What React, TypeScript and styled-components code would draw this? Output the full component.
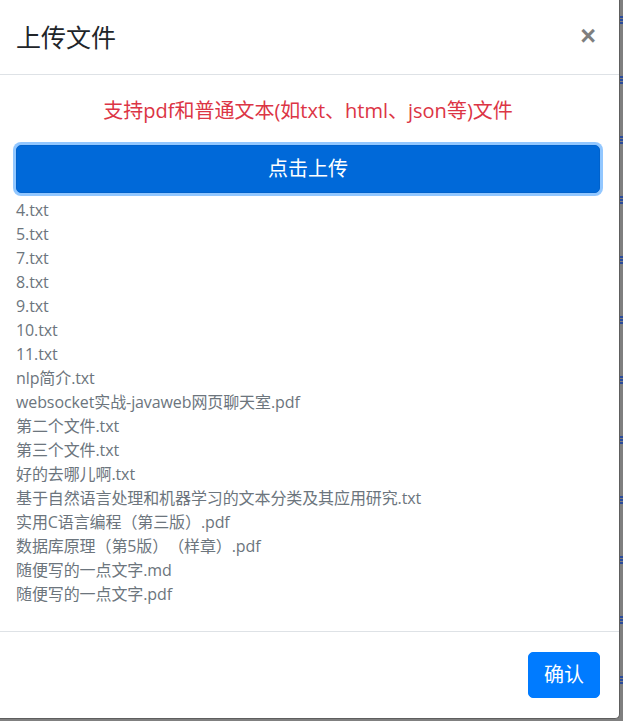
import { createGlobalStyle, styled } from "styled-components";

const GlobalStyle = createGlobalStyle`
	html, body {
		margin: 0;
		padding: 0;
		background-color: #808080;
	}
	body {
		font-family: "Open Sans", "Noto Sans CJK SC", sans-serif;
		text-spacing-trim: space-all;
	}
`;

const Page = styled.div`
	display: flex;
	flex-direction: row;
	width: 623px;
	height: 721px;
	overflow: hidden;
`;

const Modal = styled.div`
	display: flex;
	flex-direction: column;
	width: 619px;
	flex: none;
	align-self: flex-start;
	background-color: #ffffff;
	border-right: 1px solid #5e5e5e;
	border-bottom: 1px solid #5e5e5e;
	border-bottom-right-radius: 5px;
`;

const Backdrop = styled.div`
	flex: 1;
	background-color: #7f7f7f;
	background-image: repeating-linear-gradient(
		to bottom,
		#2b4d9c 0px,
		#2b4d9c 2px,
		transparent 2px,
		transparent 3px,
		#2b4d9c 3px,
		#2b4d9c 5px,
		transparent 5px,
		transparent 6px,
		#2b4d9c 6px,
		#2b4d9c 8px,
		transparent 8px,
		transparent 60px
	);
	background-size: 100% 60px;
	background-position: 0 76px;
`;

const Header = styled.div`
	display: flex;
	align-items: center;
	justify-content: space-between;
	padding: 16px 19px 16px 16px;
	border-bottom: 1px solid #dee2e6;
`;

const Title = styled.h4`
	margin: 0;
	font-family: "Open Sans", "Noto Sans CJK SC", sans-serif;
	font-size: 25px;
	font-weight: 400;
	line-height: 42px;
	color: #212529;
`;

const CloseButton = styled.button`
	border: 0;
	background: transparent;
	padding: 0 4px 2px 0;
	font-family: "Liberation Sans", sans-serif;
	font-size: 27px;
	font-weight: 700;
	line-height: 1;
	color: #000000;
	opacity: 0.5;
	cursor: pointer;
`;

const Body = styled.div`
	display: flex;
	flex-direction: column;
	padding: 16px 19px 16px 16px;
`;

const Hint = styled.p`
	margin: 5px 0 19px;
	text-align: center;
	font-size: 20px;
	line-height: 30px;
	color: #dc3545;
`;

const UploadButton = styled.button`
	display: block;
	width: 100%;
	height: 48px;
	padding: 0 16px;
	font-family: "Open Sans", "Noto Sans CJK SC", sans-serif;
	font-size: 20px;
	line-height: 30px;
	color: #ffffff;
	background-color: #0069d9;
	border: 1px solid #0062cc;
	border-radius: 5px;
	box-shadow: 0 0 0 3px rgba(38, 143, 255, 0.5);
	cursor: pointer;
`;

const FileList = styled.ul`
	list-style: none;
	margin: 5px 0 9px;
	padding: 0;
`;

const FileItem = styled.li`
	font-size: 16px;
	line-height: 24px;
	letter-spacing: -0.1px;
	color: #6c757d;
	white-space: nowrap;
`;

const Footer = styled.div`
	display: flex;
	justify-content: flex-end;
	padding: 20px 19px 20px 16px;
	border-top: 1px solid #dee2e6;
`;

const ConfirmButton = styled.button`
	width: 72px;
	height: 46px;
	padding: 0;
	font-family: "Open Sans", "Noto Sans CJK SC", sans-serif;
	font-size: 20px;
	line-height: 30px;
	color: #ffffff;
	background-color: #007bff;
	border: 1px solid #007bff;
	border-radius: 5px;
	cursor: pointer;
`;

const files = [
	"4.txt",
	"5.txt",
	"7.txt",
	"8.txt",
	"9.txt",
	"10.txt",
	"11.txt",
	"nlp简介.txt",
	"websocket实战-javaweb网页聊天室.pdf",
	"第二个文件.txt",
	"第三个文件.txt",
	"好的去哪儿啊.txt",
	"基于自然语言处理和机器学习的文本分类及其应用研究.txt",
	"实用C语言编程（第三版）.pdf",
	"数据库原理（第5版）（样章）.pdf",
	"随便写的一点文字.md",
	"随便写的一点文字.pdf",
];

export default function App() {
	return (
		<>
			<GlobalStyle />
			<Page>
				<Modal>
					<Header>
						<Title>上传文件</Title>
						<CloseButton aria-label="Close">×</CloseButton>
					</Header>
					<Body>
						<Hint>支持pdf和普通文本(如txt、html、json等)文件</Hint>
						<UploadButton>点击上传</UploadButton>
						<FileList>
							{files.map((name) => (
								<FileItem key={name}>{name}</FileItem>
							))}
						</FileList>
					</Body>
					<Footer>
						<ConfirmButton>确认</ConfirmButton>
					</Footer>
				</Modal>
				<Backdrop />
			</Page>
		</>
	);
}
